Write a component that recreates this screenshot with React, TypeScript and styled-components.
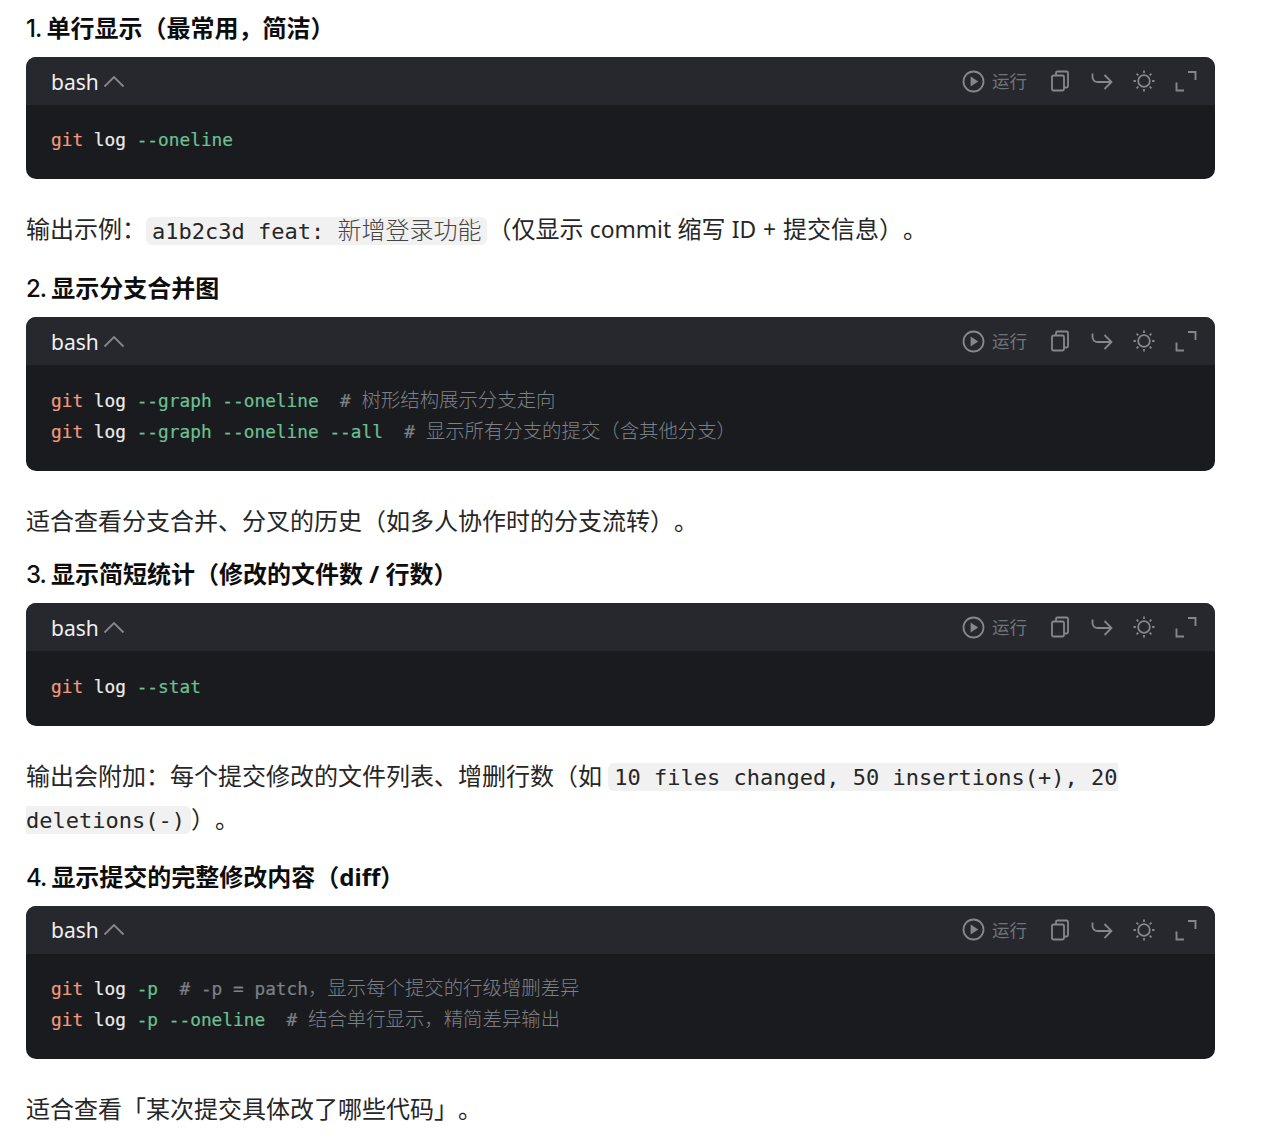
import { createGlobalStyle, styled } from "styled-components";

const GlobalStyle = createGlobalStyle`
    html, body {
        margin: 0;
        padding: 0;
        background: #ffffff;
    }
    body {
        font-family: "Noto Sans", "Noto Sans CJK SC", sans-serif;
        text-spacing-trim: space-all;
    }
`;

const Page = styled.div`
    width: 1189px;
    padding: 10px 0 0 26px;
`;

const Heading = styled.h4`
    margin: 0 0 11px 0;
    font-size: 24px;
    line-height: 36px;
    font-weight: 700;
    color: #0d0d0d;
`;

const HeadingNumber = styled.span`
    font-family: "Inter", sans-serif;
    font-weight: 500;
    letter-spacing: -1px;
    line-height: 0;
`;

const Paragraph = styled.p<{ $after: number }>`
    margin: 0 0 ${(p) => p.$after}px 0;
    font-size: 24px;
    line-height: 43px;
    color: #262626;
`;

const Latin = styled.span`
    font-size: 22.8px;
    line-height: 0;
    word-spacing: 1px;
`;

const InlineCode = styled.code`
    font-family: "DejaVu Sans Mono", monospace;
    font-size: 22px;
    line-height: 0;
    background: #f1f1f1;
    border-radius: 6px;
    padding: 1.5px 6px;
    color: #262626;
`;

const InlineCjk = styled.span`
    font-family: "Noto Sans CJK SC", sans-serif;
    font-size: 24px;
    font-weight: 300;
    line-height: 0;
    color: #444;
`;

const Block = styled.div`
    border-radius: 10px;
    overflow: hidden;
    background: #1a1b1f;
    margin-bottom: 28px;
`;

const BlockHeader = styled.div`
    height: 48px;
    background: #27282d;
    display: flex;
    align-items: center;
    justify-content: space-between;
    padding: 0 18px 0 25px;
`;

const Lang = styled.div`
    display: flex;
    align-items: center;
    gap: 4px;
    padding-top: 1px;
    color: #f0f0f0;
    font-size: 21px;
`;

const Actions = styled.div`
    display: flex;
    align-items: center;
    gap: 20px;
    color: #85878b;
`;

const RunButton = styled.div`
    display: flex;
    align-items: center;
    gap: 7px;
    margin-right: 2px;
    color: #6f7479;
    font-size: 17.5px;
    line-height: 24px;
    svg {
        color: #85878b;
    }
`;

const CodeBody = styled.pre`
    margin: 0;
    padding: 19.4px 25px 24px;
    font-family: "DejaVu Sans Mono", monospace;
    font-size: 17.8px;
    line-height: 31px;
    color: #ececec;
    -webkit-text-stroke: 0.2px;
`;

const Keyword = styled.span`
    color: #ee9c7c;
`;

const Flag = styled.span`
    color: #6cc092;
`;

const Comment = styled.span`
    color: #7d8187;
`;

const CommentCjk = styled.span`
    font-family: "Noto Sans CJK SC", sans-serif;
    font-size: 19.4px;
    font-weight: 300;
    line-height: 0;
    -webkit-text-stroke: 0;
`;

function Chevron() {
    return (
        <svg width="22" height="22" viewBox="0 0 22 22" fill="none" stroke="#85878b" strokeWidth="1.8">
            <path d="M1.5 15.5 11 6l9.5 9.5" />
        </svg>
    );
}

function PlayIcon() {
    return (
        <svg width="23" height="23" viewBox="0 0 23 23" fill="none" stroke="currentColor" strokeWidth="1.8">
            <circle cx="11.5" cy="11.5" r="10" />
            <path d="M8.6 6.6v9.8l7.6-4.9z" fill="currentColor" stroke="none" />
        </svg>
    );
}

function CopyIcon() {
    return (
        <svg width="22" height="22" viewBox="0 0 22 22" fill="none" stroke="currentColor" strokeWidth="1.8">
            <rect x="3" y="5.5" width="12" height="15" rx="1.5" />
            <path d="M7 5.5V3a1.5 1.5 0 0 1 1.5-1.5h9A1.5 1.5 0 0 1 19 3v13a1.5 1.5 0 0 1-1.5 1.5H15" />
        </svg>
    );
}

function ShareIcon() {
    return (
        <svg width="22" height="22" viewBox="0 0 22 22" fill="none" stroke="currentColor" strokeWidth="1.8">
            <path d="M1.5 3.5v3.5a5 5 0 0 0 5 5H20" />
            <path d="M13.5 5l7 7-7 7" />
        </svg>
    );
}

function SunIcon() {
    return (
        <svg width="22" height="22" viewBox="0 0 22 22" fill="none" stroke="currentColor" strokeWidth="1.8">
            <circle cx="11" cy="11" r="5.8" />
            <path d="M11 .5v2.4M11 19.1v2.4M.5 11h2.4M19.1 11h2.4M3.6 3.6l1.7 1.7M16.7 16.7l1.7 1.7M3.6 18.4l1.7-1.7M16.7 5.3l1.7-1.7" />
        </svg>
    );
}

function ExpandIcon() {
    return (
        <svg width="22" height="22" viewBox="0 0 22 22" fill="none" stroke="currentColor" strokeWidth="1.9">
            <path d="M1.5 12.5v8h7.5" />
            <path d="M13 2h7.5v8" />
        </svg>
    );
}

function CodeBlock({ children }: { children: React.ReactNode }) {
    return (
        <Block>
            <BlockHeader>
                <Lang>
                    bash
                    <Chevron />
                </Lang>
                <Actions>
                    <RunButton>
                        <PlayIcon />
                        运行
                    </RunButton>
                    <CopyIcon />
                    <ShareIcon />
                    <SunIcon />
                    <ExpandIcon />
                </Actions>
            </BlockHeader>
            <CodeBody>{children}</CodeBody>
        </Block>
    );
}

export default function App() {
    return (
        <Page>
            <GlobalStyle />
            <Heading><HeadingNumber>1. </HeadingNumber>单行显示（最常用，简洁）</Heading>
            <CodeBlock>
                <Keyword>git</Keyword> log <Flag>--oneline</Flag>
            </CodeBlock>
            <Paragraph $after={20}>
                输出示例：<InlineCode>a1b2c3d feat: <InlineCjk>新增登录功能</InlineCjk></InlineCode>（仅显示 <Latin>commit</Latin> 缩写 <Latin>ID + </Latin>提交信息）。
            </Paragraph>
            <Heading><HeadingNumber>2. </HeadingNumber>显示分支合并图</Heading>
            <CodeBlock>
                <Keyword>git</Keyword> log <Flag>--graph</Flag> <Flag>--oneline</Flag>  <Comment># <CommentCjk>树形结构展示分支走向</CommentCjk></Comment>
                {"\n"}
                <Keyword>git</Keyword> log <Flag>--graph</Flag> <Flag>--oneline</Flag> <Flag>--all</Flag>  <Comment># <CommentCjk>显示所有分支的提交（含其他分支）</CommentCjk></Comment>
            </CodeBlock>
            <Paragraph $after={14.5}>适合查看分支合并、分叉的历史（如多人协作时的分支流转）。</Paragraph>
            <Heading><HeadingNumber>3. </HeadingNumber>显示简短统计（修改的文件数 / 行数）</Heading>
            <CodeBlock>
                <Keyword>git</Keyword> log <Flag>--stat</Flag>
            </CodeBlock>
            <Paragraph $after={19.3}>
                输出会附加：每个提交修改的文件列表、增删行数（如 <InlineCode>10 files changed, 50 insertions(+), 20 deletions(-)</InlineCode>）。
            </Paragraph>
            <Heading><HeadingNumber>4. </HeadingNumber>显示提交的完整修改内容（diff）</Heading>
            <CodeBlock>
                <Keyword>git</Keyword> log <Flag>-p</Flag>  <Comment># -p = patch<CommentCjk>，显示每个提交的行级增删差异</CommentCjk></Comment>
                {"\n"}
                <Keyword>git</Keyword> log <Flag>-p</Flag> <Flag>--oneline</Flag>  <Comment># <CommentCjk>结合单行显示，精简差异输出</CommentCjk></Comment>
            </CodeBlock>
            <Paragraph $after={0}>适合查看「某次提交具体改了哪些代码」。</Paragraph>
        </Page>
    );
}
